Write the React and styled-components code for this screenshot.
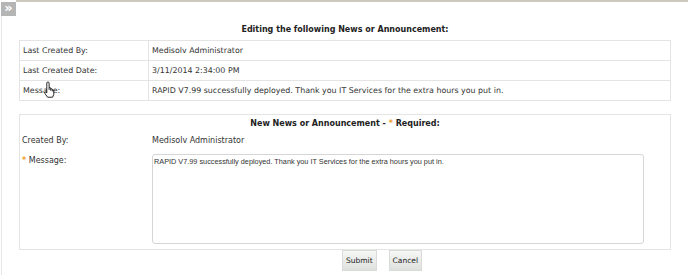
import React from 'react';
import styled, { createGlobalStyle } from 'styled-components';

const GlobalStyle = createGlobalStyle`
  html, body {
    margin: 0;
    padding: 0;
    background: #ffffff;
  }
  body {
    font-family: "DejaVu Sans", Verdana, sans-serif;
    color: #333333;
  }
`;

const Page = styled.div`
  position: relative;
  width: 688px;
  height: 275px;
  overflow: hidden;
  background: #ffffff;
`;

const TopStrip = styled.div`
  display: flex;
  align-items: flex-start;
  height: 16px;
`;

const Toggle = styled.div`
  display: flex;
  align-items: center;
  justify-content: center;
  width: 15px;
  height: 14px;
  margin: 2px 0 0 1px;
  background: #b5b5b5;
  color: #ffffff;
  font-family: "DejaVu Sans", sans-serif;
  font-weight: bold;
  font-size: 13px;
  line-height: 14px;
  padding-bottom: 2px;
  box-sizing: border-box;
`;

const TopLine = styled.div`
  flex: 1;
  height: 2px;
  background: #cdc9bd;
`;

const Body = styled.div`
  margin-left: 1px;
  border-left: 1px solid #e6e6e6;
  height: 259px;
  padding: 7px 17px 0 17px;
  box-sizing: border-box;
`;

const Title = styled.div`
  text-align: center;
  font-weight: bold;
  font-size: 8px;
  line-height: 14px;
  color: #222222;
  margin-bottom: 3px;
`;

const InfoTable = styled.div`
  border: 1px solid #e4e4e4;
`;

const InfoRow = styled.div`
  display: grid;
  grid-template-columns: 129px 1fr;
  height: 19px;
  border-top: ${p => (p.first ? 'none' : '1px solid #e4e4e4')};
  font-size: 7.9px;
  line-height: 19px;
`;

const InfoLabel = styled.div`
  padding-left: 3px;
  border-right: 1px solid #e4e4e4;
`;

const InfoValue = styled.div`
  padding-left: 3px;
  white-space: nowrap;
`;

const FormBox = styled.div`
  margin-top: 13px;
  border: 1px solid #e4e4e4;
  padding: 2px 0 5px 0;
`;

const FormRow = styled.div`
  display: grid;
  grid-template-columns: 132px 492px;
  font-size: 8px;
  line-height: 14px;
  margin-top: ${p => p.gap || 0}px;
`;

const FormLabel = styled.div`
  padding-left: 2px;
`;

const Star = styled.span`
  color: #f0a030;
  font-weight: bold;
`;

const MessageArea = styled.textarea`
  width: 492px;
  height: 90px;
  box-sizing: border-box;
  border: 1px solid #d6d6d6;
  border-radius: 3px;
  padding: 2px 1px;
  margin: 0;
  resize: none;
  font-family: "Liberation Sans", Arial, sans-serif;
  font-size: 7.3px;
  color: #333333;
  outline: none;
`;

const ButtonRow = styled.div`
  display: flex;
  gap: 12px;
  padding-left: 323px;
`;

const Button = styled.button`
  height: 21px;
  padding: 0 3px;
  border: 1px solid #d8dbd8;
  background: linear-gradient(#f6f7f6, #dde1dd);
  font-family: "DejaVu Sans", Verdana, sans-serif;
  font-size: 7.5px;
  color: #222222;
  cursor: pointer;
`;

const Cursor = styled.svg`
  position: absolute;
  left: 43px;
  top: 81px;
`;

export default function App() {
  const msg = 'RAPID V7.99 successfully deployed. Thank you IT Services for the extra hours you put in.';
  return (
    <Page>
      <GlobalStyle />
      <TopStrip>
        <Toggle>»</Toggle>
        <TopLine />
      </TopStrip>
      <Body>
        <Title>Editing the following News or Announcement:</Title>
        <InfoTable>
          <InfoRow first>
            <InfoLabel>Last Created By:</InfoLabel>
            <InfoValue>Medisolv Administrator</InfoValue>
          </InfoRow>
          <InfoRow>
            <InfoLabel>Last Created Date:</InfoLabel>
            <InfoValue>3/11/2014 2:34:00 PM</InfoValue>
          </InfoRow>
          <InfoRow>
            <InfoLabel>Message:</InfoLabel>
            <InfoValue>{msg}</InfoValue>
          </InfoRow>
        </InfoTable>
        <FormBox>
          <Title>
            New News or Announcement - <Star>*</Star> Required:
          </Title>
          <FormRow gap={1}>
            <FormLabel>Created By:</FormLabel>
            <div>Medisolv Administrator</div>
          </FormRow>
          <FormRow gap={6}>
            <FormLabel>
              <Star>*</Star> Message:
            </FormLabel>
            <MessageArea defaultValue={msg} />
          </FormRow>
        </FormBox>
        <ButtonRow>
          <Button>Submit</Button>
          <Button>Cancel</Button>
        </ButtonRow>
      </Body>
      <Cursor width="13" height="17" viewBox="0 0 16 22">
        <path
          d="M5.5 1.5 h1 a1 1 0 0 1 1 1 v6 h1 a1 1 0 0 1 1 1 v0.5 h1 a1 1 0 0 1 1 1 v0.5 h1 a1 1 0 0 1 1 1 v5 l-1.5 3.5 h-6.5 l-3.5 -5 a1 1 0 0 1 1.5 -1.5 l1 1 v-13 a1 1 0 0 1 1 -1 z M7.5 8.5 v3 M9.5 10 v2.5 M11.5 11.5 v2"
          fill="#ffffff"
          stroke="#000000"
          strokeWidth="1.1"
          strokeLinejoin="round"
        />
      </Cursor>
    </Page>
  );
}
